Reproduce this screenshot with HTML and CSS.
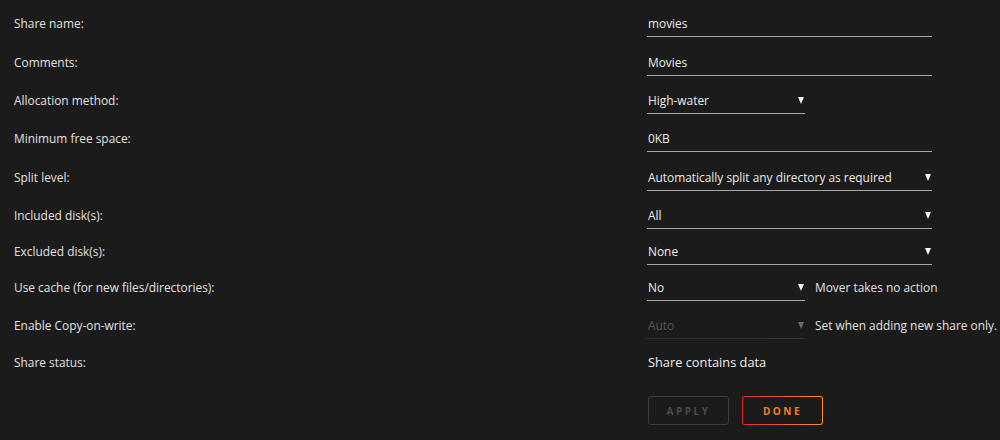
FILE: index.html
```html
<!DOCTYPE html>
<html lang="en">
<head>
    <meta charset="UTF-8">
    <meta name="viewport" content="width=device-width, initial-scale=1.0">
    <title>Share Settings</title>
    <link rel="stylesheet" href="styles.css">
</head>
<body>
    <form class="share-form" onsubmit="return false">
        <label class="field-label" for="shareName">Share name:</label>
        <div class="field-control">
            <input class="text-input wide" id="shareName" type="text" value="movies">
        </div>

        <label class="field-label" for="comments">Comments:</label>
        <div class="field-control">
            <input class="text-input wide" id="comments" type="text" value="Movies">
        </div>

        <label class="field-label" for="allocation">Allocation method:</label>
        <div class="field-control">
            <span class="select narrow">
                <select id="allocation">
                    <option>High-water</option>
                    <option>Most-free</option>
                    <option>Fill-up</option>
                </select>
            </span>
        </div>

        <label class="field-label" for="minFree">Minimum free space:</label>
        <div class="field-control">
            <input class="text-input wide" id="minFree" type="text" value="0KB">
        </div>

        <label class="field-label" for="splitLevel">Split level:</label>
        <div class="field-control">
            <span class="select wide">
                <select id="splitLevel">
                    <option>Automatically split any directory as required</option>
                </select>
            </span>
        </div>

        <label class="field-label" for="included">Included disk(s):</label>
        <div class="field-control">
            <span class="select wide">
                <select id="included">
                    <option>All</option>
                </select>
            </span>
        </div>

        <label class="field-label" for="excluded">Excluded disk(s):</label>
        <div class="field-control">
            <span class="select wide">
                <select id="excluded">
                    <option>None</option>
                </select>
            </span>
        </div>

        <label class="field-label" for="useCache">Use cache (for new files/directories):</label>
        <div class="field-control">
            <span class="select narrow">
                <select id="useCache">
                    <option>No</option>
                    <option>Yes</option>
                    <option>Only</option>
                    <option>Prefer</option>
                </select>
            </span>
            <span class="field-note">Mover takes no action</span>
        </div>

        <label class="field-label" for="cow">Enable Copy-on-write:</label>
        <div class="field-control">
            <span class="select narrow disabled">
                <select id="cow" disabled>
                    <option>Auto</option>
                </select>
            </span>
            <span class="field-note">Set when adding new share only.</span>
        </div>

        <span class="field-label">Share status:</span>
        <div class="field-control">
            <span class="status-text">Share contains data</span>
        </div>

        <div class="actions">
            <button class="btn btn-apply" type="submit" disabled>Apply</button>
            <button class="btn btn-done" type="button">Done</button>
        </div>
    </form>
</body>
</html>
```

FILE: styles.css
```css
* {
    margin: 0;
    padding: 0;
    box-sizing: border-box;
}

body {
    font-family: 'Open Sans', 'Liberation Sans', Arial, sans-serif;
    font-size: 11.9px;
    color: #e4e4e4;
    background: #1c1b1b;
    min-height: 100vh;
}

.share-form {
    display: grid;
    grid-template-columns: 633px 1fr;
    grid-template-rows: 39px 39px 38px 38px 39px 37px 35px 38px 37px 37px auto;
    padding: 3px 0 0 14px;
}

.field-label {
    align-self: center;
    color: #e0e0e0;
}

.field-control {
    align-self: center;
    display: flex;
    align-items: center;
    gap: 10px;
}

.text-input,
.select select {
    font: inherit;
    color: #eaeaea;
    background: transparent;
    border: none;
    border-bottom: 1px solid #a8a8a8;
    height: 28px;
    padding: 1px 1px 0;
    outline: none;
    border-radius: 0;
}

.wide {
    width: 285px;
}

.narrow {
    width: 158px;
}

.select {
    position: relative;
    display: block;
}

.select select {
    width: 100%;
    appearance: none;
    -webkit-appearance: none;
    padding-right: 16px;
}

.select::after {
    content: '';
    position: absolute;
    right: 1px;
    top: 11px;
    border-left: 3.5px solid transparent;
    border-right: 3.5px solid transparent;
    border-top: 7px solid #f2f2f2;
    pointer-events: none;
}

.select.disabled select {
    color: #6b6b6b;
    border-bottom-color: #3e3e3e;
}

.select.disabled::after {
    border-top-color: #6b6b6b;
}

.field-note {
    color: #e0e0e0;
    white-space: nowrap;
}

.status-text {
    color: #eeeeee;
    font-size: 12.8px;
    padding-left: 1px;
}

.actions {
    grid-column: 2;
    display: flex;
    gap: 13px;
    margin-top: 16px;
    padding-left: 1px;
}

.btn {
    width: 81px;
    height: 29px;
    font-family: inherit;
    font-size: 10px;
    font-weight: 700;
    letter-spacing: 2.5px;
    text-transform: uppercase;
    border-radius: 3px;
    background: #1c1b1b;
    cursor: pointer;
}

.btn-apply {
    color: #4a4a4a;
    border: 1px solid #3d3d3d;
    cursor: default;
}

.btn-done {
    color: #ee7f2c;
    border: 1px solid transparent;
    background: linear-gradient(#1c1b1b, #1c1b1b) padding-box,
                linear-gradient(90deg, #e22828, #ff8c2f) border-box;
}
```
